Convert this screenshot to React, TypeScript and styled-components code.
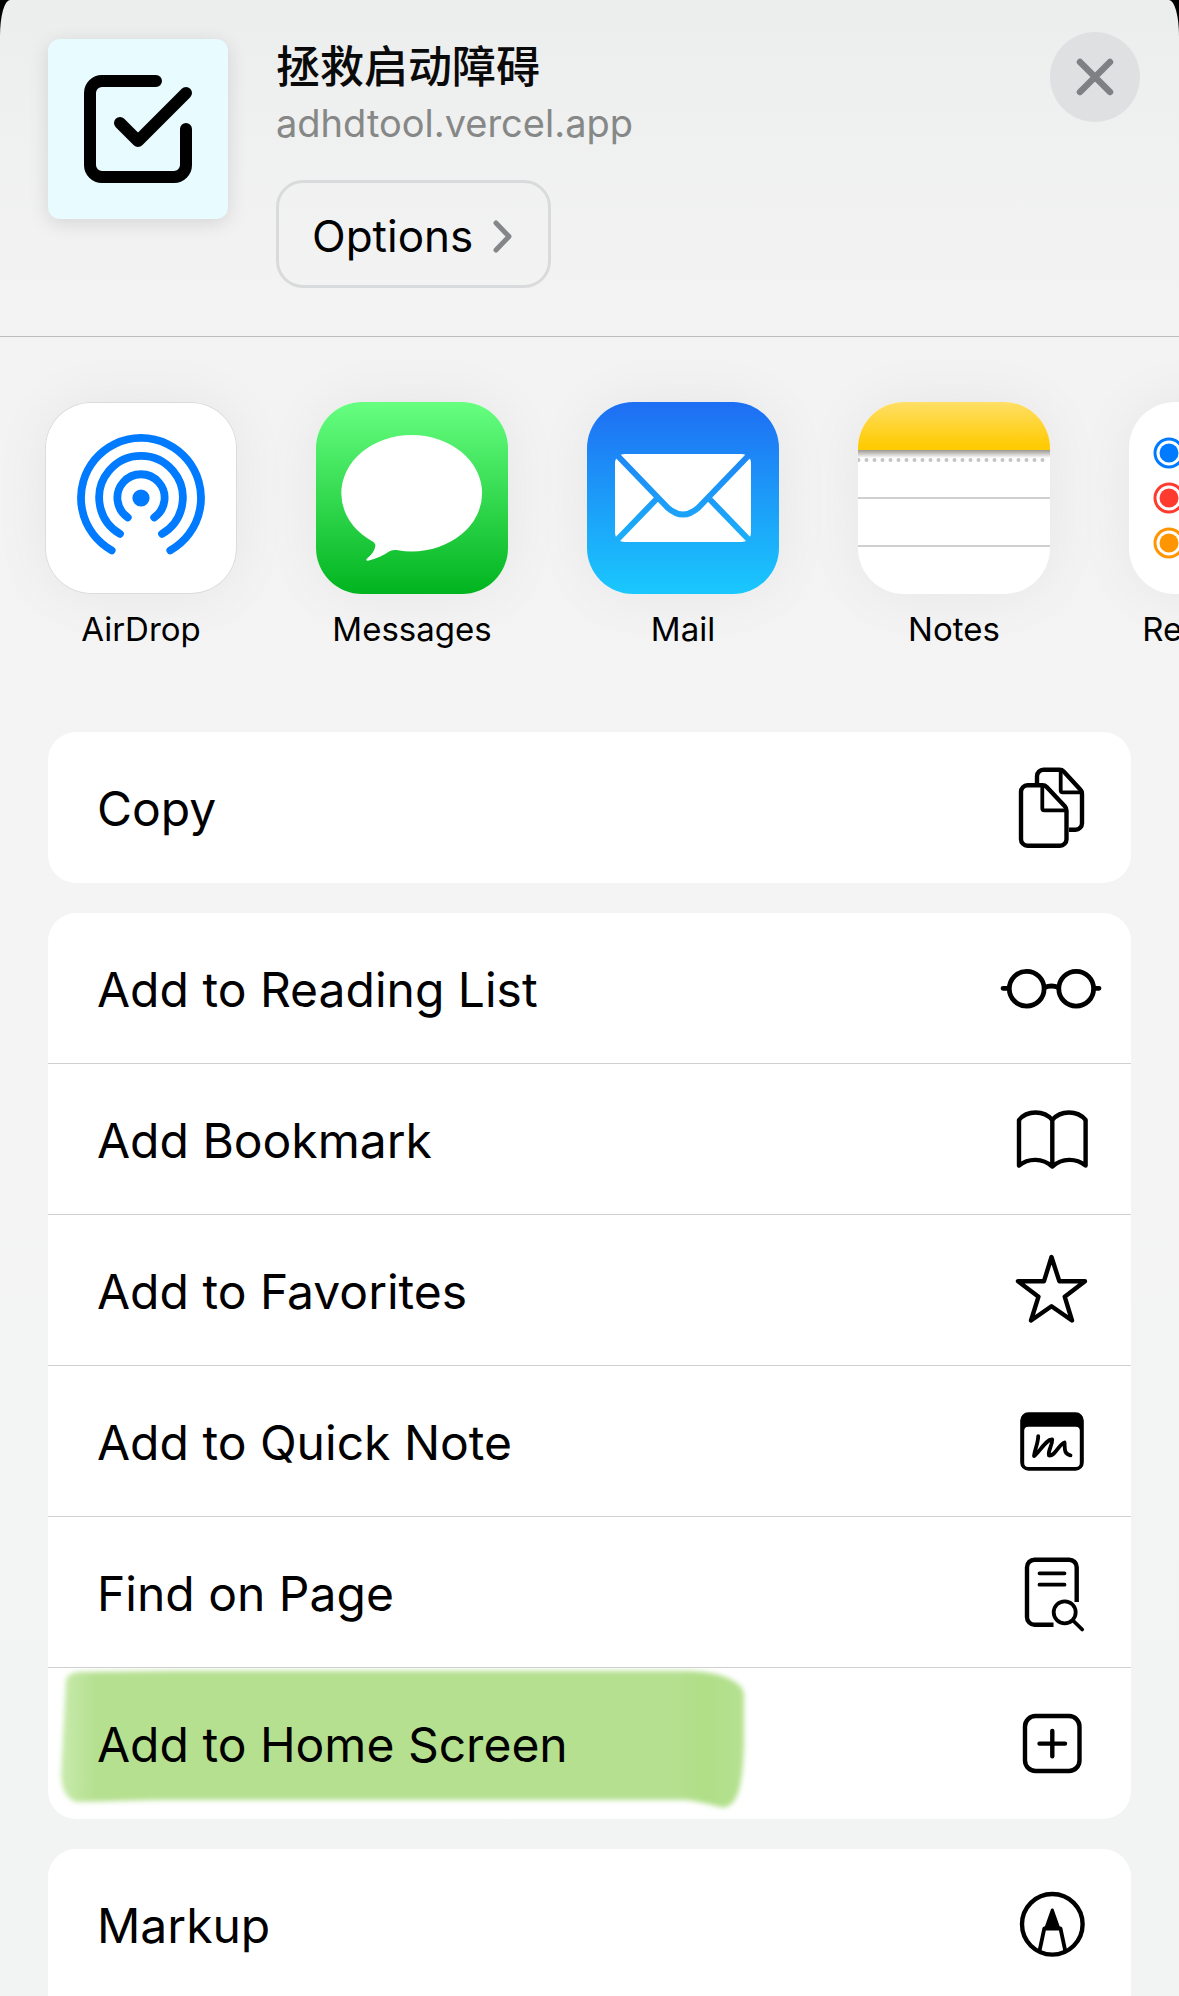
import React from "react";
import styled, { createGlobalStyle } from "styled-components";

const GlobalStyle = createGlobalStyle`
  *, *::before, *::after { box-sizing: border-box; }
  body {
    margin: 0;
    background: #000;
    color: #000;
    font-family: Inter, "Noto Sans CJK SC", sans-serif;
  }
  button { font: inherit; color: inherit; cursor: pointer; }
`;

const Sheet = styled.main`
  display: flex;
  flex-direction: column;
  height: 100vh;
  overflow: hidden;
  border-radius: 10px 10px 0 0 / 36px 36px 0 0;
  background: linear-gradient(180deg, #eceeed 0, #f3f3f3 300px, #f4f4f4 900px, #f2f3f3 100%);
`;

const Header = styled.header`
  display: flex;
  align-items: flex-start;
  justify-content: space-between;
  padding: 32px 39px 48px 48px;
  border-bottom: 1px solid #bcbdbd;
`;

const Site = styled.div`
  display: flex;
  align-items: flex-start;
  gap: 48px;
  padding-top: 7px;
`;

const SiteIcon = styled.svg`
  width: 180px;
  height: 180px;
  border-radius: 12px;
  background: #e8fbff;
  box-shadow: 0 4px 20px rgba(0, 0, 0, 0.12);
`;

const SiteInfo = styled.div`
  display: flex;
  flex-direction: column;
  align-items: flex-start;
`;

const Title = styled.h1`
  margin: 0;
  font-size: 44px;
  font-weight: 500;
  line-height: 56px;
  color: #0a0a0a;
`;

const Address = styled.p`
  margin: 0 0 29px;
  font-size: 38px;
  line-height: 56px;
  color: #868887;
`;

const OptionsButton = styled.button`
  display: flex;
  align-items: center;
  gap: 18px;
  height: 108px;
  padding: 3px 33px 0;
  border: 3px solid #d9dadb;
  border-radius: 27px;
  background: transparent;
  font-size: 44px;
  line-height: 56px;
`;

const Chevron = styled.svg`
  width: 24px;
  height: 36px;
`;

const CloseButton = styled.button`
  display: grid;
  place-items: center;
  flex: none;
  width: 90px;
  height: 90px;
  padding: 0;
  border: 0;
  border-radius: 50%;
  background: #dfe0e2;
`;

const AppStrip = styled.nav`
  display: flex;
  flex: none;
  gap: 79px;
  padding: 65px 45px 82px;
  overflow-x: auto;
  scrollbar-width: none;
`;

const AppButton = styled.button`
  display: flex;
  flex: none;
  flex-direction: column;
  align-items: center;
  gap: 14px;
  width: 192px;
  padding: 0;
  border: 0;
  background: none;
  font-size: 33px;
  line-height: 42px;
`;

const Tile = styled.svg<{ $outlined?: boolean }>`
  width: 192px;
  height: 192px;
  border-radius: 46px;
  background: #fff;
  box-shadow: 0 0 60px rgba(0, 0, 0, 0.06)${(p) => (p.$outlined ? ", inset 0 0 0 1px #dcdcdc" : "")};
`;

const Actions = styled.div`
  display: flex;
  flex: 1;
  flex-direction: column;
  gap: 30px;
  min-height: 0;
  padding: 0 48px;
  overflow-y: auto;
  scrollbar-width: none;
`;

const Card = styled.ul`
  flex: none;
  margin: 0;
  padding: 0;
  overflow: hidden;
  list-style: none;
  border-radius: 28px;
  background: #fff;
  &:last-child { border-radius: 28px 28px 0 0; }
`;

const Item = styled.li`
  border-bottom: 1px solid #d0d0d1;
  &:last-child { border-color: transparent; }
`;

const ActionButton = styled.button`
  position: relative;
  display: flex;
  align-items: center;
  justify-content: space-between;
  width: 100%;
  height: 150px;
  padding: 0 29px 0 49px;
  border: 0;
  background: none;
  font-size: 48px;
  line-height: 60px;
  text-align: left;
`;

const Label = styled.span`
  position: relative;
  padding-top: 3px;
`;

const Glyph = styled.svg`
  flex: none;
  width: 100px;
  height: 100px;
  overflow: visible;
  fill: none;
  stroke: #000;
  stroke-width: 4.4;
  stroke-linecap: round;
  stroke-linejoin: round;
`;

const Marker = styled.svg`
  position: absolute;
  top: 0;
  left: 0;
  width: 720px;
  height: 150px;
`;

const apps = [
  {
    name: "AirDrop",
    outlined: true,
    art: (
      <g fill="none" stroke="#007aff" strokeWidth="7.8" strokeLinecap="round">
        <path d="M66.7 148.3A60 60 0 1 1 125.3 148.3" />
        <path d="M75 131.9A41.8 41.8 0 1 1 117 131.9" />
        <path d="M82.8 115.4A23.6 23.6 0 1 1 109.2 115.4" />
        <circle cx="96" cy="96" r="8.6" fill="#007aff" stroke="none" />
      </g>
    ),
  },
  {
    name: "Messages",
    art: (
      <>
        <linearGradient id="messages" x1="0" y1="0" x2="0" y2="1">
          <stop offset="0" stopColor="#67ff81" />
          <stop offset="1" stopColor="#01b41f" />
        </linearGradient>
        <rect width="192" height="192" fill="url(#messages)" />
        <g fill="#fff">
          <ellipse cx="95.7" cy="91.2" rx="70.4" ry="58.2" />
          <path d="M55 138Q60 141 59.3 144.5Q58 151 50.5 157Q49.5 159 52 158.7Q65 155.5 73 149.5Q75.5 147.6 80 148L82 135Z" />
        </g>
      </>
    ),
  },
  {
    name: "Mail",
    art: (
      <>
        <linearGradient id="mail" gradientUnits="userSpaceOnUse" x1="0" y1="0" x2="0" y2="192">
          <stop offset="0" stopColor="#1e6ef3" />
          <stop offset="1" stopColor="#1ac8fd" />
        </linearGradient>
        <rect width="192" height="192" fill="url(#mail)" />
        <rect x="28" y="52" width="136" height="88" rx="9" fill="#fff" />
        <g fill="none" stroke="url(#mail)" strokeWidth="6">
          <path d="M28 51L81 106Q96 119 111 106L164 51" />
          <path d="M28 140L70.500 96M164 140L121.500 96" />
        </g>
      </>
    ),
  },
  {
    name: "Notes",
    art: (
      <>
        <linearGradient id="notes" x1="0" y1="0" x2="0" y2="1">
          <stop offset="0" stopColor="#ffdf66" />
          <stop offset="0.9" stopColor="#ffcb05" />
        </linearGradient>
        <linearGradient id="notesShade" x1="0" y1="0" x2="0" y2="1">
          <stop offset="0" stopColor="#9c9890" />
          <stop offset="1" stopColor="#fff" />
        </linearGradient>
        <rect width="192" height="48" fill="url(#notes)" />
        <rect y="48" width="192" height="8" fill="url(#notesShade)" />
        <path d="M0.5 58H192" stroke="#c4c4c4" strokeWidth="4" strokeLinecap="round" strokeDasharray="0 8" />
        <path d="M0 96H192M0 144H192" stroke="#d0d0d0" strokeWidth="2" />
      </>
    ),
  },
  {
    name: "Reminders",
    art: (
      <>
        {["#007aff", "#ff3b30", "#ff9500"].map((color, i) => (
          <g key={color} fill={color}>
            <circle cx="40" cy={51 + i * 45} r="14" fill="none" stroke={color} strokeWidth="3" />
            <circle cx="40" cy={51 + i * 45} r="9.5" />
            <rect x="68" y={50 + i * 45} width="124" height="2" fill="#d0d0d0" />
          </g>
        ))}
      </>
    ),
  },
];

const glyphs = {
  copy: (
    <>
      <path d="M35 26V19.2A6.5 6.5 0 0 1 41.5 12.7H57.5Q60 12.7 61.7 14.5L78.3 32.5Q80 34.3 80 36.7V66.2A6.5 6.5 0 0 1 73.5 72.7H67" strokeLinecap="butt" />
      <path d="M58.7 13V33.3A2 2 0 0 0 60.7 35.3H79.5" strokeWidth="3.8" />
      <path d="M25.5 28.3H40.5Q43 28.3 44.7 30L62.8 49.2Q64.5 51 64.5 53.5V82.2A6.5 6.5 0 0 1 58 88.7H25.5A6.5 6.5 0 0 1 19 82.2V34.8A6.5 6.5 0 0 1 25.5 28.3Z" />
      <path d="M40.3 29V51.3A2 2 0 0 0 42.3 53.3H64" strokeWidth="3.8" />
    </>
  ),
  glasses: (
    <g strokeWidth="4.8">
      <circle cx="24.7" cy="50.7" r="17.4" />
      <circle cx="74.2" cy="50.7" r="17.4" />
      <path d="M42.5 49.5Q49.5 46.5 56.5 49.5M1 50.3H6M93 50.3H97" />
    </g>
  ),
  book: (
    <path d="M17 76.5V31C25 21 42 21 50.3 31C58.5 21 75.5 21 83.6 31V76.5C74 68.8 60 68.8 50.3 77.5C40.5 68.8 26.5 68.8 17 76.5ZM50.3 31V77.5" />
  ),
  star: (
    <path d="M49.5 17L57.3 41.2H83L62.7 56.7L70 80.5L49.5 66.3L29 80.5L36.5 56.7L16 41.2H42Z" />
  ),
  note: (
    <>
      <path d="M26.5 21.3H73.5A8.3 8.3 0 0 1 81.8 29.6V71.4A8.3 8.3 0 0 1 73.5 79.7H26.5A8.3 8.3 0 0 1 18.2 71.4V29.6A8.3 8.3 0 0 1 26.5 21.3ZM26.2 35.7A4 4 0 0 0 22.2 39.7V71.900A4 4 0 0 0 26.2 75.900H73.800A4 4 0 0 0 77.800 71.900V39.700A4 4 0 0 0 73.800 35.700Z" fill="#000" fillRule="evenodd" stroke="none" />
      <path d="M36.2 45.2C36 53 32.500 59 32 65C37 62 44 48 50.2 48.500C50.500 55 45.500 59 47 64.500C53 65.500 57 53 62.500 51.500C63 57 61.500 63 68.500 64.300" strokeWidth="3.8" />
    </>
  ),
  find: (
    <>
      <path d="M74.7 60V25.2A7.5 7.5 0 0 0 67.2 17.7H32.5A7.5 7.5 0 0 0 25 25.2V75.2A7.5 7.5 0 0 0 32.5 82.7H51.5" strokeLinecap="butt" />
      <path d="M37.5 31.3H62.5M37.5 42.7H62.5M71 78.5L80.2 87.5" strokeWidth="3.8" />
      <circle cx="62.7" cy="70.3" r="11" strokeWidth="3.8" />
    </>
  ),
  plus: (
    <>
      <rect x="23" y="23" width="54.5" height="55" rx="10.5" />
      <path d="M37.5 50.6H63M50.3 37.9V63.3" />
    </>
  ),
  markup: (
    <>
      <circle cx="50.3" cy="50.3" r="30.3" />
      <path d="M50.3 36L56.5 53.5H44.1Z" fill="#000" strokeWidth="3" />
      <path d="M37.5 77L42.3 54.5H58.5L63.3 77" strokeWidth="3.8" />
    </>
  ),
};

type Action = { name: string; glyph: keyof typeof glyphs; marked?: boolean };

const groups: Action[][] = [
  [{ name: "Copy", glyph: "copy" }],
  [
    { name: "Add to Reading List", glyph: "glasses" },
    { name: "Add Bookmark", glyph: "book" },
    { name: "Add to Favorites", glyph: "star" },
    { name: "Add to Quick Note", glyph: "note" },
    { name: "Find on Page", glyph: "find" },
    { name: "Add to Home Screen", glyph: "plus", marked: true },
  ],
  [{ name: "Markup", glyph: "markup" }],
];

function MarkerStroke() {
  return (
    <Marker viewBox="0 0 720 150" aria-hidden="true">
      <defs>
        <filter id="soft" x="-5%" y="-10%" width="110%" height="120%">
          <feGaussianBlur stdDeviation="2.5" />
        </filter>
        <linearGradient id="ink" x1="0" y1="0" x2="1" y2="0">
          <stop offset="0" stopColor="#c8eaad" />
          <stop offset="0.05" stopColor="#b5e090" />
          <stop offset="0.9" stopColor="#b5e090" />
          <stop offset="0.94" stopColor="#afdf87" />
          <stop offset="1" stopColor="#b5e191" />
        </linearGradient>
      </defs>
      <path
        d="M30 4L120 3L642 3Q668 4 682 11Q697 18 696 28V75Q695 122 686 133Q680 141 672 139Q650 133 637 132L110 132L30 134Q15 132 13 108L18 12Q20 5 30 4Z"
        fill="url(#ink)"
        filter="url(#soft)"
      />
    </Marker>
  );
}

export default function App() {
  return (
    <>
      <GlobalStyle />
      <Sheet>
        <Header>
          <Site>
            <SiteIcon viewBox="0 0 30 30" fill="none" stroke="#000" strokeWidth="2" strokeLinecap="round" strokeLinejoin="round" aria-hidden="true">
              <path d="M12 14L15 17L23 9" />
              <path d="M23 15V21A2 2 0 0 1 21 23H9A2 2 0 0 1 7 21V9A2 2 0 0 1 9 7H18" />
            </SiteIcon>
            <SiteInfo>
              <Title lang="zh-CN">拯救启动障碍</Title>
              <Address>adhdtool.vercel.app</Address>
              <OptionsButton type="button">
                Options
                <Chevron viewBox="0 0 24 36" fill="none" stroke="#85868a" strokeWidth="5" strokeLinecap="round" strokeLinejoin="round" aria-hidden="true">
                  <path d="M5 5L18 18.5L5 32" />
                </Chevron>
              </OptionsButton>
            </SiteInfo>
          </Site>
          <CloseButton type="button" aria-label="Close">
            <svg width="40" height="40" viewBox="0 0 40 40" stroke="#7f8083" strokeWidth="6.5" strokeLinecap="round" aria-hidden="true">
              <path d="M5 5L35 35M35 5L5 35" />
            </svg>
          </CloseButton>
        </Header>
        <AppStrip aria-label="Share with">
          {apps.map((app) => (
            <AppButton key={app.name} type="button">
              <Tile viewBox="0 0 192 192" $outlined={app.outlined} aria-hidden="true">
                {app.art}
              </Tile>
              {app.name}
            </AppButton>
          ))}
        </AppStrip>
        <Actions>
          {groups.map((group) => (
            <Card key={group[0].name}>
              {group.map((action) => (
                <Item key={action.name}>
                  <ActionButton type="button">
                    {action.marked && <MarkerStroke />}
                    <Label>{action.name}</Label>
                    <Glyph viewBox="0 0 100 100" aria-hidden="true">
                      {glyphs[action.glyph]}
                    </Glyph>
                  </ActionButton>
                </Item>
              ))}
            </Card>
          ))}
        </Actions>
      </Sheet>
    </>
  );
}
